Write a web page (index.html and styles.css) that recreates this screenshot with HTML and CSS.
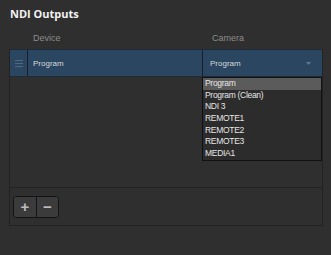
FILE: index.html
```html
<!DOCTYPE html>
<html>
<head>
<meta charset="utf-8">
<link rel="stylesheet" href="styles.css">
</head>
<body>
<div class="page">
  <h1 class="title">NDI Outputs</h1>
  <div class="head">
    <span class="h-device">Device</span>
    <span class="h-camera">Camera</span>
  </div>
  <div class="panel">
    <div class="table">
      <div class="row">
        <div class="handle">
          <svg width="8" height="7" viewBox="0 0 8 7"><path d="M0 0.5H8M0 3.5H8M0 6.5H8" stroke="#4f6780" stroke-width="1"/></svg>
        </div>
        <div class="cell device">Program</div>
        <div class="cell camera">
          <span>Program</span>
          <svg class="caret" width="5" height="3" viewBox="0 0 5 3"><path d="M0 0H5L2.5 3Z" fill="#637a90"/></svg>
        </div>
        <ul class="menu">
          <li class="sel">Program</li>
          <li>Program (Clean)</li>
          <li>NDI 3</li>
          <li>REMOTE1</li>
          <li>REMOTE2</li>
          <li>REMOTE3</li>
          <li>MEDIA1</li>
        </ul>
      </div>
    </div>
    <div class="toolbar">
      <div class="btns">
        <button class="btn">+</button>
        <button class="btn">&minus;</button>
      </div>
    </div>
  </div>
</div>
</body>
</html>
```

FILE: styles.css
```css
* { box-sizing: border-box; }
html, body {
  margin: 0;
  padding: 0;
  background: #2f2f2f;
}
body {
  width: 331px;
  height: 255px;
  overflow: hidden;
  font-family: "Liberation Sans", Arial, sans-serif;
}
.page {
  position: relative;
  padding-top: 7px;
}
.title {
  margin: 0 0 0 10px;
  font-family: "Open Sans", "Liberation Sans", sans-serif;
  font-size: 11px;
  font-weight: 700;
  line-height: 14px;
  color: #f2f2f2;
}
.head {
  display: flex;
  height: 28px;
  align-items: center;
  padding-top: 6px;
  font-size: 9px;
  color: #8d8d8d;
}
.h-device { margin-left: 33px; width: 179px; }
.panel {
  margin-left: 9px;
  width: 314px;
  border-left: 1px solid #222;
  border-right: 1px solid #222;
  border-bottom: 1px solid #222;
}
.table {
  height: 138px;
}
.row {
  display: flex;
  height: 28px;
  background: #2b4660;
  border-top: 1px solid #1e2c3a;
  border-bottom: 1px solid #1e2c3a;
  font-size: 8px;
  color: #d4d9de;
}
.handle {
  width: 18px;
  border-right: 1px solid #15202b;
  display: flex;
  align-items: center;
  justify-content: center;
}
.cell {
  display: flex;
  align-items: center;
}
.device {
  width: 175px;
  padding-left: 5px;
  border-right: 1px solid #15202b;
}
.camera {
  flex: 1;
  padding-left: 7px;
  padding-right: 11px;
  justify-content: space-between;
}
.caret { margin-top: 1px; }
.menu {
  position: absolute;
  left: 202px;
  top: 77px;
  width: 120px;
  margin: 0;
  padding: 0;
  list-style: none;
  background: #2c2c2c;
  border: 1px solid #111;
  font-size: 8.5px;
  letter-spacing: -0.3px;
  color: #e6e6e6;
}
.menu li {
  height: 11.7px;
  line-height: 11.7px;
  padding-left: 2px;
}
.menu li.sel {
  background: #5b5b5b;
}
.toolbar {
  height: 38px;
  border-top: 1px solid #222;
  padding-top: 8px;
  padding-left: 3px;
}
.btns {
  display: inline-flex;
  height: 22px;
  border: 1px solid #141414;
  border-radius: 3px;
  background: #3a3a3a;
  overflow: hidden;
}
.btn {
  width: 22px;
  height: 20px;
  margin: 0;
  padding: 0;
  border: none;
  background: #3b3b3b;
  color: #bdbdbd;
  font-family: "Liberation Sans", Arial, sans-serif;
  font-size: 15px;
  font-weight: 700;
  line-height: 20px;
  text-align: center;
}
.btn + .btn {
  border-left: 1px solid #141414;
}
```
